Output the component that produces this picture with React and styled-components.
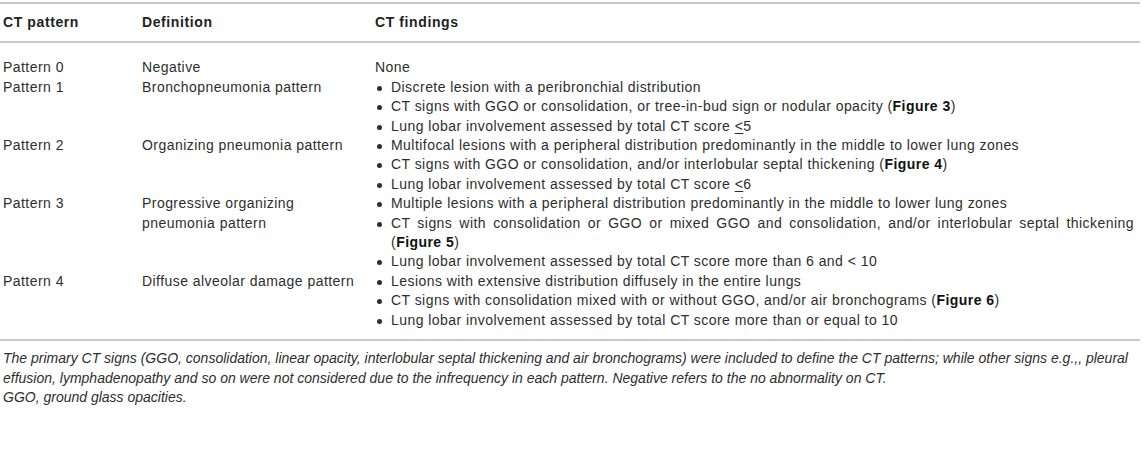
import React from "react"
import styled, { createGlobalStyle } from "styled-components"

const GlobalStyle = createGlobalStyle`
	body {
		margin: 0;
		background: #fff;
		font-family: "Liberation Sans", Arial, sans-serif;
		font-size: 14px;
		letter-spacing: 0.45px;
		line-height: 19.4px;
		color: #2e2e2e;
	}
`
const Wrapper = styled.div`
	width: 1140px;
	padding-top: 2px;
`
const Table = styled.div`
	border-top: 2px solid #c8c8c8;
	border-bottom: 2px solid #c8c8c8;
`
const HeadRow = styled.div`
	display: grid;
	grid-template-columns: 139px 233px 1fr;
	padding: 9px 0 9px 3px;
	border-bottom: 2px solid #c8c8c8;
`
const HeadCell = styled.div`
	font-weight: bold;
	letter-spacing: 0.6px;
	color: #222;
`
const Body = styled.div`
	padding: 15px 0 9px;
`
const Row = styled.div`
	display: grid;
	grid-template-columns: 139px 233px 1fr;
	padding-left: 3px;
`
const Cell = styled.div`
	padding-right: 6px;
`
const List = styled.ul`
	margin: 0;
	padding: 0;
	list-style: none;
`
const Item = styled.li`
	position: relative;
	padding-left: 16px;
	text-align: justify;
	&::before {
		content: "";
		position: absolute;
		left: 2px;
		top: 8px;
		width: 5px;
		height: 5px;
		border-radius: 50%;
		background: #2e2e2e;
	}
	b {
		color: #111;
	}
`
const Le = styled.span`
	text-decoration: underline;
	text-underline-offset: 2px;
`
const Notes = styled.div`
	padding: 8px 8px 0 3px;
`
const Note = styled.div`
	font-style: italic;
	letter-spacing: 0;
`

const rows = [
	{ pattern: "Pattern 0", definition: ["Negative"], plain: "None" },
	{
		pattern: "Pattern 1",
		definition: ["Bronchopneumonia pattern"],
		findings: [
			<>Discrete lesion with a peribronchial distribution</>,
			<>CT signs with GGO or consolidation, or tree-in-bud sign or nodular opacity (<b>Figure 3</b>)</>,
			<>Lung lobar involvement assessed by total CT score <Le>&lt;</Le>5</>,
		],
	},
	{
		pattern: "Pattern 2",
		definition: ["Organizing pneumonia pattern"],
		findings: [
			<>Multifocal lesions with a peripheral distribution predominantly in the middle to lower lung zones</>,
			<>CT signs with GGO or consolidation, and/or interlobular septal thickening (<b>Figure 4</b>)</>,
			<>Lung lobar involvement assessed by total CT score <Le>&lt;</Le>6</>,
		],
	},
	{
		pattern: "Pattern 3",
		definition: ["Progressive organizing", "pneumonia pattern"],
		findings: [
			<>Multiple lesions with a peripheral distribution predominantly in the middle to lower lung zones</>,
			<>CT signs with consolidation or GGO or mixed GGO and consolidation, and/or interlobular septal thickening (<b>Figure 5</b>)</>,
			<>Lung lobar involvement assessed by total CT score more than 6 and &lt; 10</>,
		],
	},
	{
		pattern: "Pattern 4",
		definition: ["Diffuse alveolar damage pattern"],
		findings: [
			<>Lesions with extensive distribution diffusely in the entire lungs</>,
			<>CT signs with consolidation mixed with or without GGO, and/or air bronchograms (<b>Figure 6</b>)</>,
			<>Lung lobar involvement assessed by total CT score more than or equal to 10</>,
		],
	},
]

const App = () => {
	return (
		<>
			<GlobalStyle />
			<Wrapper>
				<Table>
					<HeadRow>
						<HeadCell>CT pattern</HeadCell>
						<HeadCell>Definition</HeadCell>
						<HeadCell>CT findings</HeadCell>
					</HeadRow>
					<Body>
						{rows.map((row) => (
							<Row key={row.pattern}>
								<Cell>{row.pattern}</Cell>
								<Cell>
									{row.definition.map((line, i) => (
										<div key={i}>{line}</div>
									))}
								</Cell>
								<Cell>
									{row.plain ? (
										row.plain
									) : (
										<List>
											{row.findings.map((item, i) => (
												<Item key={i}>{item}</Item>
											))}
										</List>
									)}
								</Cell>
							</Row>
						))}
					</Body>
				</Table>
				<Notes>
					<Note>
						The primary CT signs (GGO, consolidation, linear opacity, interlobular septal thickening and air bronchograms) were included to define the CT patterns; while other signs e.g.,, pleural effusion, lymphadenopathy and so on were not considered due to the infrequency in each pattern. Negative refers to the no abnormality on CT.
					</Note>
					<Note>GGO, ground glass opacities.</Note>
				</Notes>
			</Wrapper>
		</>
	)
}

export default App
